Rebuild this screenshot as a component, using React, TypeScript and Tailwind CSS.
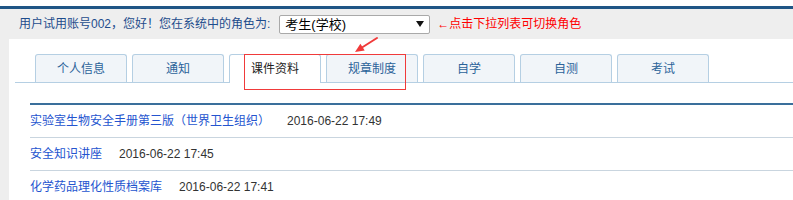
import {FC} from "react";

const tabs = ["个人信息", "通知", "课件资料", "规章制度", "自学", "自测", "考试"];

const rows = [
    {title: "实验室生物安全手册第三版（世界卫生组织）", time: "2016-06-22 17:49"},
    {title: "安全知识讲座", time: "2016-06-22 17:45"},
    {title: "化学药品理化性质档案库", time: "2016-06-22 17:41"},
];

const cjk = "font-['Liberation_Sans','Noto_Sans_CJK_SC',sans-serif]";

const App: FC = () => {
    const active = 2;

    return (
        <div className={`relative w-[793px] h-[200px] overflow-hidden bg-white text-[12px] ${cjk}`}>
            {/* top bar */}
            <div className="mt-[6px] h-[3px] bg-[#1f5585]"></div>

            {/* header: user + role select */}
            <div className="h-[30px] bg-[#eeeeee] flex items-center pl-[19px]">
                <span className="text-[#1d4c8c] leading-none">用户试用账号002，您好！您在系统中的角色为:</span>
                <div className="ml-[9px] w-[151px] h-[19px] bg-white border border-[#a9a9a9] rounded-[2px] flex items-center justify-between pl-[5px] pr-[5px]">
                    <span className="text-[13px] text-black leading-none">考生(学校)</span>
                    <svg width="8" height="6" viewBox="0 0 8 6">
                        <polygon points="0,0 8,0 4,6" fill="#111"/>
                    </svg>
                </div>
                <span className="ml-[7px] text-[#ff0000] leading-none">←点击下拉列表可切换角色</span>
            </div>

            <div className="flex h-full">
                <div className="w-[9px] bg-[#eeeeee]"></div>
                <div className="flex-1 bg-white pt-[15px]">
                    {/* tabs */}
                    <div className="ml-[6px] pl-[20px] flex items-end gap-[5px] border-b border-[#b5cfe3] h-[29px]">
                        {tabs.map((t, i) => (
                            <div
                                key={t}
                                className={
                                    i === active
                                        ? "relative z-10 -mb-px w-[92px] h-[29px] pb-px flex items-center justify-center border border-b-0 border-[#b5cfe3] rounded-t-[3px] bg-white text-[#222]"
                                        : "w-[92px] h-[28px] flex items-center justify-center border border-b-0 border-[#b5cfe3] rounded-t-[3px] bg-[#f1f5f9] text-[#2b6399]"
                                }
                            >
                                {t}
                            </div>
                        ))}
                    </div>

                    {/* list */}
                    <div className="ml-[21px] mt-[20px] border-t-2 border-[#3a6f9b]">
                        {rows.map((r) => (
                            <div key={r.title} className="h-[33px] flex items-center border-b border-[#c9d5df]">
                                <a href="#" className="text-[#2454cf]">{r.title}</a>
                                <span className="ml-[17px] text-[#333] font-['Liberation_Sans',sans-serif]">{r.time}</span>
                            </div>
                        ))}
                    </div>
                </div>
            </div>

            {/* annotation: red box + arrow */}
            <div className="absolute left-[244px] top-[54px] w-[162px] h-[36px] border border-[#f03a3a] z-20 pointer-events-none"></div>
            <svg className="absolute left-[350px] top-[34px] z-20" width="32" height="22" viewBox="0 0 32 22">
                <line x1="27" y1="4" x2="12" y2="13.5" stroke="#f03a3a" strokeWidth="2" strokeLinecap="round"/>
                <polygon points="5,18 14.7,16.6 10.4,9.8" fill="#f03a3a"/>
            </svg>
        </div>
    );
};

export default App;
